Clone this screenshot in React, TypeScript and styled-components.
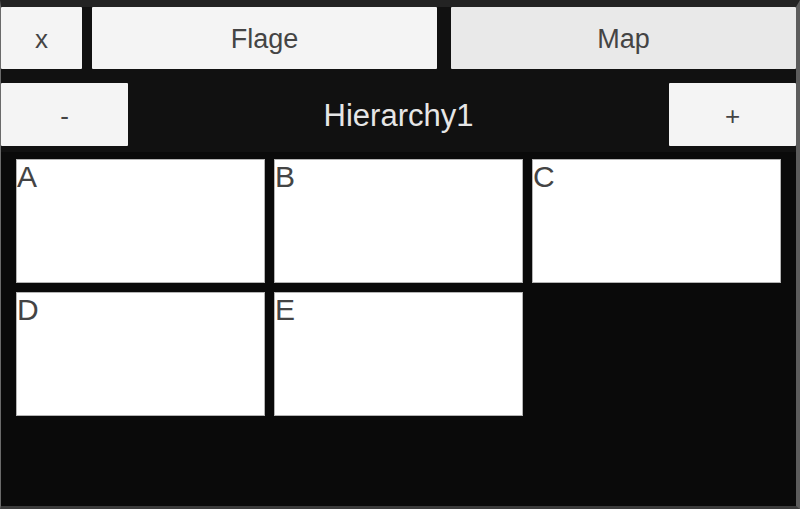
import styled, { createGlobalStyle } from "styled-components";

const GlobalStyle = createGlobalStyle`
  html, body {
    margin: 0;
    padding: 0;
    background: #111;
  }
  * {
    box-sizing: border-box;
  }
`;

const Window = styled.div`
  display: flex;
  flex-direction: column;
  width: 800px;
  height: 509px;
  background: #111;
  border-top: 7px solid #232323;
  border-right: 4px solid #5c5c5c;
  border-bottom: 3px solid #3c3c3c;
  border-left: 1px solid #6a6a6a;
  font-family: "Liberation Sans", Arial, sans-serif;
  overflow: hidden;
`;

const TopBar = styled.div`
  display: flex;
  gap: 10px;
  height: 62px;
  margin-bottom: 14px;
`;

const Button = styled.div<{ width?: number; active?: boolean; size?: number }>`
  display: flex;
  align-items: center;
  justify-content: center;
  flex: ${({ width }) => (width ? `0 0 ${width}px` : "1 1 0")};
  height: 100%;
  padding-top: 3px;
  background: ${({ active }) => (active ? "#e9e9e9" : "#f4f4f4")};
  color: #444;
  font-size: ${({ size }) => size ?? 26}px;
  border-radius: 1px;
  user-select: none;
`;

const TabButton = styled(Button)`
  & + & {
    margin-left: 4px;
  }
`;

const HierarchyBar = styled.div`
  display: flex;
  align-items: center;
  height: 63px;
  margin-bottom: 6px;
`;

const HierarchyLabel = styled.div`
  flex: 1;
  text-align: center;
  color: #e6e6e6;
  font-size: 31px;
  padding-top: 2px;
`;

const GridArea = styled.div`
  flex: 1;
  background: #0a0a0a;
  padding: 7px 0 0 15px;
  display: grid;
  grid-template-columns: repeat(3, 249px);
  grid-auto-rows: 124px;
  gap: 9px;
  align-content: start;
`;

const Card = styled.div`
  background: #fff;
  border: 1px solid #b4b4b4;
  color: #444;
  font-size: 30px;
  line-height: 1.15;
  padding: 0;
`;

const cards = ["A", "B", "C", "D", "E"];

export default function App() {
  return (
    <>
      <GlobalStyle />
      <Window>
        <TopBar>
          <Button width={81}>x</Button>
          <TabButton width={345} size={27}>
            Flage
          </TabButton>
          <TabButton width={345} size={27} active>
            Map
          </TabButton>
        </TopBar>
        <HierarchyBar>
          <Button width={127}>-</Button>
          <HierarchyLabel>Hierarchy1</HierarchyLabel>
          <Button width={127}>+</Button>
        </HierarchyBar>
        <GridArea>
          {cards.map((c) => (
            <Card key={c}>{c}</Card>
          ))}
        </GridArea>
      </Window>
    </>
  );
}
